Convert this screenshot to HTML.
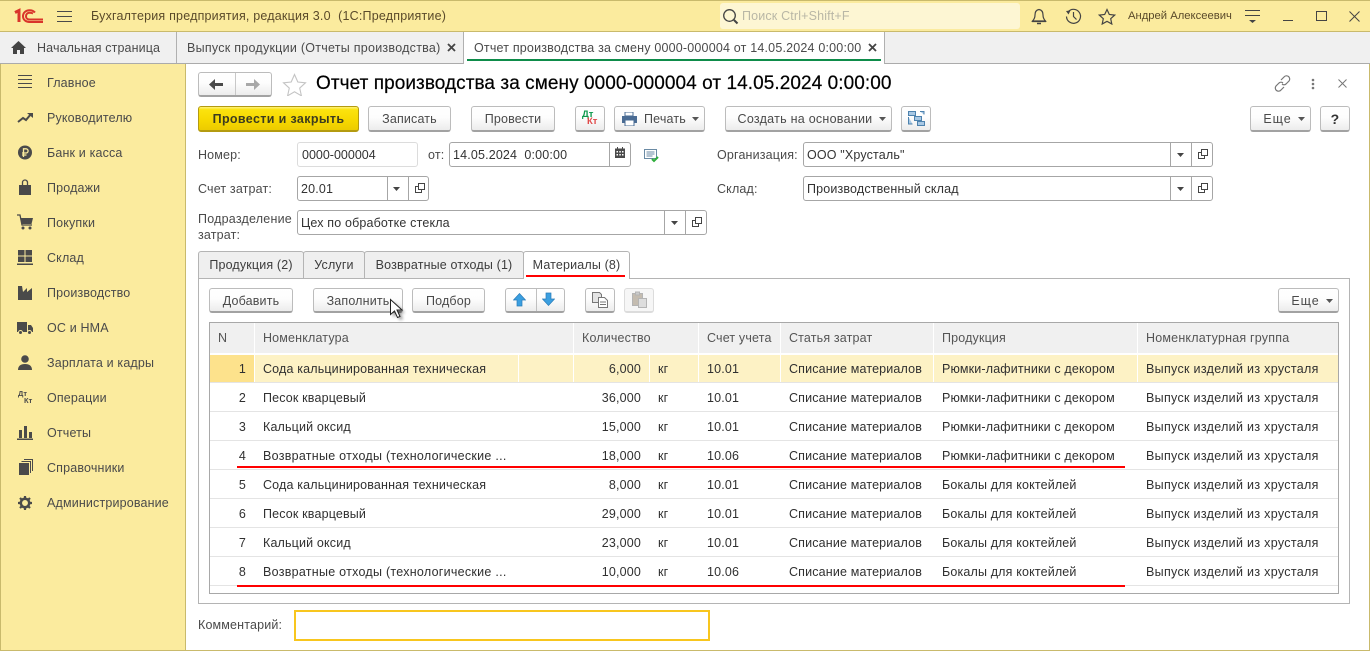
<!DOCTYPE html>
<html lang="ru"><head><meta charset="utf-8"><title>Отчет производства за смену</title>
<style>
html,body{margin:0;padding:0;width:1370px;height:651px;overflow:hidden;background:#fff}
body{position:relative;font:12.5px "Liberation Sans",Arial,sans-serif;color:#4a4a4a}
div,span,svg{position:absolute;box-sizing:border-box}
.t{white-space:nowrap;line-height:16px;letter-spacing:.16px}
.b{background:linear-gradient(#fff 0%,#fdfdfd 45%,#ececec 100%);border:1px solid #bcbcbc;border-bottom:2px solid #a2a2a2;border-radius:3px;height:26px;text-align:center;line-height:25px;color:#4a4a4a;letter-spacing:.16px;white-space:nowrap}
.bs{height:25px;line-height:24px}
.f{background:#fff;border:1px solid #a6a6a6;border-radius:3px;height:25px}
.s{top:0;bottom:0;width:1px;background:#a6a6a6}
.tab{top:251px;height:27px;background:#efefef;border:1px solid #b4b4b4;border-bottom:none;border-radius:3px 3px 0 0;line-height:27px;text-align:center;color:#3c3c3c;letter-spacing:.16px;white-space:nowrap}
.si{left:47px}
.ic{left:17px;width:16px;height:16px}
.hd{top:323px;height:30px;background:#f0f0f0;line-height:31px;padding-left:8px;color:#555;letter-spacing:.16px;white-space:nowrap}
.r{left:210px;width:1128px;height:28px;border-bottom:1px solid #e4e4e4;line-height:28px;color:#303030}
.r span{white-space:nowrap;letter-spacing:.16px;top:0}
.n{left:0;width:36px;text-align:right}
.a{left:53px}.q{left:340px;width:91px;text-align:right}.u{left:448px}.c{left:497px}.z{left:579px}.p{left:732px}
.r .g{left:936px;letter-spacing:.31px}
.r .w{letter-spacing:.27px}
.red{height:2px;background:#f00;left:237px;width:888px}
</style></head><body>
<!-- top bar -->
<div style="left:0;top:0;width:1370px;height:32px;background:#fbeb9e;border-top:1px solid #c9ba6c;border-bottom:1px solid #c9ba6c"></div>
<svg style="left:13px;top:8px" width="32" height="16" viewBox="0 0 32 16" fill="none" stroke="#d9352b" stroke-width="2"><path d="M2 4.500 6 2.500V14" stroke-width="3"/><path d="M22 4.500C20.500 2.800 18.500 2.200 16.500 2.200 12.800 2.200 10 4.800 10 8.200s2.800 5.800 6.500 5.800H30"/><path d="M20 5.500C19 5 18 4.800 16.700 4.800 14.500 4.800 13 6.200 13 8.200S14.500 11.500 16.700 11.500H30"/></svg>
<svg style="left:57px;top:10px" width="15" height="13" stroke="#4a4a4a" stroke-width="1"><path d="M0 1.500H15M0 6.500H15M0 11.500H15"/></svg>
<span class="t" style="left:91px;top:8px;color:#5a4a2a;letter-spacing:.2px">Бухгалтерия предприятия, редакция 3.0&nbsp; (1С:Предприятие)</span>
<div style="left:720px;top:3px;width:300px;height:26px;background:#fdf6d3;border-radius:3px"></div>
<svg style="left:722px;top:8px" width="17" height="17" fill="none" stroke="#444" stroke-width="1.300"><circle cx="7.500" cy="7.500" r="5.800"/><path d="M12 12l3.500 3.500" stroke-width="2"/></svg>
<span class="t" style="left:742px;top:8px;color:#b9b7a6">Поиск Ctrl+Shift+F</span>
<svg style="left:1031px;top:8px" width="16" height="17" fill="none" stroke="#444" stroke-width="1.200"><path d="M8 1.500C5 2 4 4.500 4 7c0 2.500-1 4.500-2.500 6h13C13 11.500 12 9.500 12 7c0-2.500-1-5-4-5.500zM1 13.500h14"/><path d="M6 15.500h4" stroke-width="1.500"/></svg>
<svg style="left:1065px;top:8px" width="17" height="17" fill="none" stroke="#444" stroke-width="1.200"><path d="M3 4A7 7 0 1 1 1.500 8.500"/><path d="M8.500 4v4.500l3 3"/><path d="M1 3l4.500-.5L3.500 6.500z" fill="#444" stroke="none"/></svg>
<svg style="left:1098px;top:8px" width="18" height="17" fill="none" stroke="#444" stroke-width="1.200"><path d="M9 1.500l2.300 5 5.400.6-4 3.600 1.100 5.300L9 13.300 4.200 16l1.100-5.300-4-3.600 5.400-.6z"/></svg>
<span class="t" style="left:1128px;top:8px;font-size:11.250px;color:#5a4a2a;letter-spacing:0">Андрей Алексеевич</span>
<svg style="left:1245px;top:10px" width="15" height="14" stroke="#444"><path d="M0 .500H15M0 5.500H15"/><path d="M4 10h7l-3.500 3z" fill="#444" stroke="none"/></svg>
<div style="left:1283px;top:20px;width:10px;height:1px;background:#444"></div>
<div style="left:1316px;top:11px;width:11px;height:10px;border:1px solid #444"></div>
<svg style="left:1349px;top:11px" width="11" height="11" stroke="#444"><path d="M.5.500l10 10M10.500.500l-10 10"/></svg>
<!-- tabs bar -->
<div style="left:0;top:32px;width:1370px;height:32px;background:#f0f0f0;border-bottom:1px solid #ababab"></div>
<svg style="left:11px;top:41px" width="15" height="13" fill="#444"><path d="M7.500 0 15 7h-2v6H9V9H6v4H2V7H0z"/></svg>
<span class="t" style="left:37px;top:40px;letter-spacing:.12px">Начальная страница</span>
<div style="left:176px;top:32px;width:1px;height:31px;background:#b0b0b0"></div>
<span class="t" style="left:187px;top:40px;letter-spacing:.26px">Выпуск продукции (Отчеты производства)</span>
<svg style="left:447px;top:43px" width="9" height="9" stroke="#444" stroke-width="1.800"><path d="M1 1l7 7M8 1l-7 7"/></svg>
<div style="left:463px;top:32px;width:422px;height:32px;background:#fff;border-left:1px solid #b0b0b0;border-right:1px solid #b0b0b0"></div>
<div style="left:467px;top:59px;width:414px;height:2px;background:#0e8c4a"></div>
<span class="t" style="left:474px;top:40px;letter-spacing:.19px">Отчет производства за смену 0000-000004 от 14.05.2024 0:00:00</span>
<svg style="left:868px;top:43px" width="9" height="9" stroke="#444" stroke-width="1.800"><path d="M1 1l7 7M8 1l-7 7"/></svg>
<!-- sidebar -->
<div style="left:0;top:64px;width:186px;height:587px;background:#fbeb9e;border-left:1px solid #c9ba6c;border-right:1px solid #c9ba6c;border-bottom:1px solid #c9ba6c"></div>
<div style="left:186px;top:650px;width:1184px;height:1px;background:#c9ba6c"></div>
<div style="left:1369px;top:64px;width:1px;height:587px;background:#c9ba6c"></div>
<svg class="ic" style="top:75px" fill="none" stroke="#4a4a4a"><path d="M1 .5H15M1 4.500H15M1 8.500H15M1 12.500H15"/></svg>
<svg class="ic" style="top:110px" fill="none" stroke="#4a4a4a" stroke-width="2"><path d="M1 12l5-4 3 2 5-6"/><path d="M10 3h6v5z" fill="#4a4a4a" stroke="none"/></svg>
<svg class="ic" style="top:145px"><circle cx="8" cy="7.500" r="7" fill="#4a4a4a"/><path d="M6.500 12V3.800h2.500a2 2 0 0 1 0 4.200H5M5 10h4.500" fill="none" stroke="#fbeb9e" stroke-width="1.300"/></svg>
<svg class="ic" style="top:179px" fill="#4a4a4a"><path d="M2 6h12v11H2z"/><path d="M5.500 7V3.500a2.500 2.500 0 0 1 5 0V7" fill="none" stroke="#4a4a4a" stroke-width="1.300"/></svg>
<svg class="ic" style="top:214px" fill="#4a4a4a"><path d="M3 4h13l-1.500 6H5z"/><path d="M0 1h3l2 10h10" fill="none" stroke="#4a4a4a" stroke-width="1.300"/><circle cx="6" cy="14" r="1.500"/><circle cx="13" cy="14" r="1.500"/></svg>
<svg class="ic" style="top:250px" fill="#4a4a4a"><path d="M1 0h6.500v5.500H1zM8.500 0H15v5.500H8.500zM1 6.500h6.500V12H1zM8.500 6.500H15V12H8.500zM0 13.500h16V15H0z"/></svg>
<svg class="ic" style="top:285px" fill="#4a4a4a"><path d="M1 1h4l1 6 4-4v4l5-4v12H1z"/></svg>
<svg class="ic" style="top:320px" fill="#4a4a4a"><path d="M0 2h10v10H0zM11 5h3l2 3v4h-5z"/><circle cx="3.500" cy="12.500" r="2" stroke="#fbeb9e"/><circle cx="12.500" cy="12.500" r="2" stroke="#fbeb9e"/></svg>
<svg class="ic" style="top:355px" fill="#4a4a4a"><circle cx="8" cy="4" r="3.800"/><path d="M1 15c0-4 2.500-6 7-6s7 2 7 6z"/></svg>
<span class="t" style="left:18px;top:390px;font-size:7.500px;font-weight:bold;line-height:8px;color:#4a4a4a;letter-spacing:0">Дт</span>
<span class="t" style="left:24px;top:397px;font-size:7.500px;font-weight:bold;line-height:8px;color:#4a4a4a;letter-spacing:0">Кт</span>
<svg class="ic" style="top:425px" fill="#4a4a4a"><path d="M2 5h3v8H2zM7 1h3v12H7zM12 7h3v6h-3zM0 13.500h16V15H0z"/></svg>
<svg class="ic" style="top:459px" fill="#4a4a4a"><path d="M2 4h10v13H2z"/><path d="M4.500 2.500H13.500V14M7 .5H15.500V12" fill="none" stroke="#4a4a4a"/></svg>
<svg class="ic" style="top:495px" fill="none" stroke="#4a4a4a"><circle cx="8" cy="8" r="4.200" stroke-width="2.500"/><path d="M8 1v3M8 12v3M1 8h3M12 8h3M3 3l2 2M11 11l2 2M13 3l-2 2M5 11l-2 2" stroke-width="2.200"/></svg>
<span class="t si" style="top:75px">Главное</span>
<span class="t si" style="top:110px">Руководителю</span>
<span class="t si" style="top:145px">Банк и касса</span>
<span class="t si" style="top:180px">Продажи</span>
<span class="t si" style="top:215px">Покупки</span>
<span class="t si" style="top:250px">Склад</span>
<span class="t si" style="top:285px">Производство</span>
<span class="t si" style="top:320px">ОС и НМА</span>
<span class="t si" style="top:355px">Зарплата и кадры</span>
<span class="t si" style="top:390px">Операции</span>
<span class="t si" style="top:425px">Отчеты</span>
<span class="t si" style="top:460px">Справочники</span>
<span class="t si" style="top:495px">Администрирование</span>
<!-- header -->
<div class="b" style="left:198px;top:72px;width:74px;height:25px"><div class="s" style="left:36px;background:#c8c8c8"></div></div>
<svg style="left:209px;top:79px" width="15" height="11" fill="#4a4a4a"><path d="M0 5.500 6 0v4h8v3H6v4z"/></svg>
<svg style="left:245px;top:79px" width="15" height="11" fill="#a8a8a8"><path d="M15 5.500 9 0v4H1v3h8v4z"/></svg>
<svg style="left:282px;top:73px" width="25" height="23" fill="none" stroke="#c4c4c4" stroke-width="1.100"><path d="M12.500 1.500l3.300 7.500 7.700.8-5.800 5.300 1.700 7.700-6.900-4-6.900 4 1.700-7.700-5.800-5.300 7.700-.8z"/></svg>
<span class="t" style="left:316px;top:73px;font-size:19px;line-height:22px;color:#000;letter-spacing:.07px;-webkit-text-stroke:.2px #000">Отчет производства за смену 0000-000004 от 14.05.2024 0:00:00</span>
<svg style="left:1274px;top:75px" width="17" height="17" fill="none" stroke="#777" stroke-width="1.200"><path d="M7 5l3-3a3 3 0 0 1 5 4l-3 3a3 3 0 0 1-4 0M10 12l-3 3a3 3 0 0 1-5-4l3-3a3 3 0 0 1 4 0"/></svg>
<svg style="left:1311px;top:78px" width="4" height="12" fill="#777"><circle cx="2" cy="2" r="1.300"/><circle cx="2" cy="6" r="1.300"/><circle cx="2" cy="10" r="1.300"/></svg>
<svg style="left:1338px;top:79px" width="9" height="9" stroke="#777"><path d="M.5.500l8 8M8.500.500l-8 8"/></svg>
<!-- command bar -->
<div class="b" style="left:198px;top:106px;width:161px;background:linear-gradient(#fff27a 0,#fbe30e 12%,#f6d800 60%,#eccb00 100%);border-color:#b49b10;color:#3c3c20;font-weight:bold;letter-spacing:.36px">Провести и закрыть</div>
<div class="b" style="left:368px;top:106px;width:83px">Записать</div>
<div class="b" style="left:471px;top:106px;width:84px">Провести</div>
<div class="b" style="left:575px;top:106px;width:30px"></div>
<span class="t" style="left:582px;top:110px;font-size:9.500px;font-weight:bold;line-height:10px;color:#0e9a4d;letter-spacing:0">Дт</span>
<span class="t" style="left:587px;top:117px;font-size:9.500px;font-weight:bold;line-height:10px;color:#e04a4a;letter-spacing:0">Кт</span>
<div class="b" style="left:614px;top:106px;width:91px;padding-left:25px;text-align:left;text-indent:4px">Печать</div>
<svg style="left:622px;top:112px" width="15" height="14"><path d="M3 0h8v4H3z" fill="#fff" stroke="#4a6c94"/><path d="M0 4h15v7H0z" fill="#4a6c94"/><path d="M3 8h9v6H3z" fill="#fff" stroke="#4a6c94"/></svg>
<svg style="left:692px;top:117px" width="8" height="4" fill="#555"><path d="M0 0h7L3.500 4z"/></svg>
<div class="b" style="left:725px;top:106px;width:167px;padding-right:7px;letter-spacing:.26px">Создать на основании</div>
<svg style="left:879px;top:117px" width="8" height="4" fill="#555"><path d="M0 0h7L3.500 4z"/></svg>
<div class="b" style="left:901px;top:106px;width:30px"></div>
<svg style="left:908px;top:111px" width="17" height="15" fill="#a8c8e4" stroke="#4d82ae"><path d="M.5.500h7v4h-7zM6.500 5.500h7v4h-7zM9.500 10.500h7v4h-7zM12 .5h4v3M.5 6v7h4" stroke-width="1"/></svg>
<div class="b" style="left:1250px;top:106px;width:61px;padding-right:6px;letter-spacing:.9px">Еще</div>
<svg style="left:1298px;top:117px" width="8" height="4" fill="#555"><path d="M0 0h7L3.500 4z"/></svg>
<div class="b" style="left:1320px;top:106px;width:30px;font-weight:bold;font-size:14px;color:#333">?</div>
<!-- fields -->
<span class="t" style="left:198px;top:147px">Номер:</span>
<div class="f" style="left:297px;top:142px;width:121px;border-color:#dcdcdc"></div>
<span class="t" style="left:302px;top:147px;color:#333;letter-spacing:0">0000-000004</span>
<span class="t" style="left:428px;top:147px">от:</span>
<div class="f" style="left:449px;top:142px;width:182px"><div class="s" style="left:159px"></div></div>
<span class="t" style="left:453px;top:147px;color:#333">14.05.2024&nbsp; 0:00:00</span>
<svg style="left:615px;top:147px" width="11" height="12" fill="#4a4a4a"><path d="M0 1.500h10V11H0z"/><path d="M2.500 0v2M7.500 0v2" stroke="#4a4a4a"/><path d="M1.500 4h1.500v1.500H1.500zM4.300 4h1.500v1.500H4.300zM7 4h1.500v1.500H7zM1.500 7h1.500v1.500H1.500zM4.300 7h1.500v1.500H4.300zM7 7h1.500v1.500H7z" fill="#fff"/></svg>
<svg style="left:644px;top:149px" width="16" height="14" fill="none" stroke="#6a8aa4"><path d="M.5.500h12v9H.5zM2.500 3h8M2.500 5h8M2.500 7h6"/><path d="M8 10l2 2 4-4" stroke="#2fae3c" stroke-width="2"/></svg>
<span class="t" style="left:717px;top:147px">Организация:</span>
<div class="f" style="left:803px;top:142px;width:410px"><div class="s" style="left:366px"></div><div class="s" style="left:387px"></div></div>
<span class="t" style="left:807px;top:147px;color:#333">ООО "Хрусталь"</span>
<span class="t" style="left:198px;top:181px">Счет затрат:</span>
<div class="f" style="left:297px;top:176px;width:132px"><div class="s" style="left:89px"></div><div class="s" style="left:110px"></div></div>
<span class="t" style="left:301px;top:181px;color:#333">20.01</span>
<span class="t" style="left:717px;top:181px">Склад:</span>
<div class="f" style="left:803px;top:176px;width:410px"><div class="s" style="left:366px"></div><div class="s" style="left:387px"></div></div>
<span class="t" style="left:807px;top:181px;color:#333">Производственный склад</span>
<span class="t" style="left:198px;top:211px;letter-spacing:.22px">Подразделение</span>
<span class="t" style="left:198px;top:227px">затрат:</span>
<div class="f" style="left:297px;top:210px;width:410px"><div class="s" style="left:366px"></div><div class="s" style="left:387px"></div></div>
<span class="t" style="left:301px;top:215px;color:#333">Цех по обработке стекла</span>
<svg style="left:393px;top:187px" width="7" height="4" fill="#444"><path d="M0 0h7L3.500 4z"/></svg>
<svg style="left:1177px;top:153px" width="7" height="4" fill="#444"><path d="M0 0h7L3.500 4z"/></svg>
<svg style="left:1177px;top:187px" width="7" height="4" fill="#444"><path d="M0 0h7L3.500 4z"/></svg>
<svg style="left:671px;top:221px" width="7" height="4" fill="#444"><path d="M0 0h7L3.500 4z"/></svg>
<svg style="left:415px;top:183px" width="10" height="10" fill="none" stroke="#444"><path d="M3.500.5h6v6h-6zM3 3.500H.5v6h6V7"/></svg>
<svg style="left:1198px;top:149px" width="10" height="10" fill="none" stroke="#444"><path d="M3.500.5h6v6h-6zM3 3.500H.5v6h6V7"/></svg>
<svg style="left:1198px;top:183px" width="10" height="10" fill="none" stroke="#444"><path d="M3.500.5h6v6h-6zM3 3.500H.5v6h6V7"/></svg>
<svg style="left:692px;top:217px" width="10" height="10" fill="none" stroke="#444"><path d="M3.500.5h6v6h-6zM3 3.500H.5v6h6V7"/></svg>
<!-- tab panel -->
<div style="left:198px;top:278px;width:1152px;height:326px;border:1px solid #b4b4b4;background:#fff"></div>
<div class="tab" style="left:198px;width:106px">Продукция (2)</div>
<div class="tab" style="left:303px;width:62px">Услуги</div>
<div class="tab" style="left:364px;width:160px">Возвратные отходы (1)</div>
<div class="tab" style="left:523px;width:107px;height:28px;background:#fff">Материалы (8)</div>
<div style="left:526px;top:275px;width:99px;height:2px;background:#f00"></div>
<div class="b bs" style="left:209px;top:288px;width:84px">Добавить</div>
<div class="b bs" style="left:313px;top:288px;width:90px">Заполнить</div>
<div class="b bs" style="left:412px;top:288px;width:73px">Подбор</div>
<div class="b bs" style="left:505px;top:288px;width:60px"><div class="s" style="left:30px;background:#c0c0c0"></div></div>
<svg style="left:513px;top:293px" width="13" height="14" fill="#3b9fe0" stroke="#2a7cb8" stroke-width=".7"><path d="M6.500.5 12.500 7H9v6H4V7H.5z"/></svg>
<svg style="left:542px;top:292px" width="13" height="14" fill="#3b9fe0" stroke="#2a7cb8" stroke-width=".7"><path d="M6.500 13.500 12.500 7H9V1H4v6H.5z"/></svg>
<div class="b bs" style="left:585px;top:288px;width:30px"></div>
<svg style="left:592px;top:292px" width="16" height="16" fill="#fff" stroke="#777"><path d="M.5.500h7l2 2v8h-9z" fill="#e4e4e4"/><path d="M6.500 5.500h6l3 3v7h-9z"/><path d="M8 10h6M8 12.500h6"/></svg>
<div class="b bs" style="left:624px;top:288px;width:30px;border-color:#dcdcdc;background:#f6f6f6"></div>
<svg style="left:632px;top:291px" width="15" height="17" fill="#ccc" stroke="#b4b4b4"><path d="M.5 2.500h10v12H.5z" fill="#c4bcb0"/><path d="M3.500 1h4v3h-4z"/><path d="M6.500 7.500h8v9h-8z" fill="#ddd"/></svg>
<div class="b bs" style="left:1278px;top:288px;width:61px;padding-right:6px;letter-spacing:.9px">Еще</div>
<svg style="left:1326px;top:299px" width="8" height="4" fill="#555"><path d="M0 0h7L3.500 4z"/></svg>
<!-- table -->
<div style="left:209px;top:322px;width:1130px;height:272px;border:1px solid #a8a8a8;background:#fff"></div>
<div class="hd" style="left:210px;width:44px;padding-left:8px">N</div>
<div class="hd" style="left:255px;width:318px">Номенклатура</div>
<div class="hd" style="left:574px;width:124px">Количество</div>
<div class="hd" style="left:699px;width:81px">Счет учета</div>
<div class="hd" style="left:781px;width:152px">Статья затрат</div>
<div class="hd" style="left:934px;width:203px">Продукция</div>
<div class="hd" style="left:1138px;width:200px;letter-spacing:.2px">Номенклатурная группа</div>
<div style="left:210px;top:355px;width:1128px;height:27px;background:#fdf2c5"></div>
<div style="left:210px;top:355px;width:44px;height:27px;background:#fde28c"></div>
<div style="left:254px;top:355px;width:1px;height:27px;background:#fff"></div>
<div style="left:518px;top:355px;width:1px;height:27px;background:#fff"></div>
<div style="left:573px;top:355px;width:1px;height:27px;background:#fff"></div>
<div style="left:649px;top:355px;width:1px;height:27px;background:#fff"></div>
<div style="left:698px;top:355px;width:1px;height:27px;background:#fff"></div>
<div style="left:780px;top:355px;width:1px;height:27px;background:#fff"></div>
<div style="left:933px;top:355px;width:1px;height:27px;background:#fff"></div>
<div style="left:1137px;top:355px;width:1px;height:27px;background:#fff"></div>
<div class="r" style="top:355px"><span class="n">1</span><span class="a">Сода кальцинированная техническая</span><span class="q">6,000</span><span class="u">кг</span><span class="c">10.01</span><span class="z">Списание материалов</span><span class="p">Рюмки-лафитники с декором</span><span class="g">Выпуск изделий из хрусталя</span></div>
<div class="r" style="top:384px"><span class="n">2</span><span class="a">Песок кварцевый</span><span class="q">36,000</span><span class="u">кг</span><span class="c">10.01</span><span class="z">Списание материалов</span><span class="p">Рюмки-лафитники с декором</span><span class="g">Выпуск изделий из хрусталя</span></div>
<div class="r" style="top:413px"><span class="n">3</span><span class="a">Кальций оксид</span><span class="q">15,000</span><span class="u">кг</span><span class="c">10.01</span><span class="z">Списание материалов</span><span class="p">Рюмки-лафитники с декором</span><span class="g">Выпуск изделий из хрусталя</span></div>
<div class="r" style="top:442px"><span class="n">4</span><span class="a w">Возвратные отходы (технологические ...</span><span class="q">18,000</span><span class="u">кг</span><span class="c">10.06</span><span class="z">Списание материалов</span><span class="p">Рюмки-лафитники с декором</span><span class="g">Выпуск изделий из хрусталя</span></div>
<div class="r" style="top:471px"><span class="n">5</span><span class="a">Сода кальцинированная техническая</span><span class="q">8,000</span><span class="u">кг</span><span class="c">10.01</span><span class="z">Списание материалов</span><span class="p">Бокалы для коктейлей</span><span class="g">Выпуск изделий из хрусталя</span></div>
<div class="r" style="top:500px"><span class="n">6</span><span class="a">Песок кварцевый</span><span class="q">29,000</span><span class="u">кг</span><span class="c">10.01</span><span class="z">Списание материалов</span><span class="p">Бокалы для коктейлей</span><span class="g">Выпуск изделий из хрусталя</span></div>
<div class="r" style="top:529px"><span class="n">7</span><span class="a">Кальций оксид</span><span class="q">23,000</span><span class="u">кг</span><span class="c">10.01</span><span class="z">Списание материалов</span><span class="p">Бокалы для коктейлей</span><span class="g">Выпуск изделий из хрусталя</span></div>
<div class="r" style="top:558px"><span class="n">8</span><span class="a w">Возвратные отходы (технологические ...</span><span class="q">10,000</span><span class="u">кг</span><span class="c">10.06</span><span class="z">Списание материалов</span><span class="p">Бокалы для коктейлей</span><span class="g">Выпуск изделий из хрусталя</span></div>
<div class="red" style="top:466px"></div>
<div class="red" style="top:585px"></div>
<!-- cursor -->
<svg style="left:388px;top:298px" width="20" height="26"><defs><filter id="bl"><feGaussianBlur stdDeviation="1.500"/></filter></defs><path d="M5 4v15l4-3 3 6 3-1-3-6h5z" fill="#000" opacity=".45" filter="url(#bl)"/><path d="M2.500 1.500v15l4-3.500 3 6.500 2.500-1-3-6.500h5z" fill="#fff" stroke="#222"/></svg>
<!-- comment -->
<span class="t" style="left:198px;top:617px">Комментарий:</span>
<div style="left:294px;top:610px;width:416px;height:31px;border:2px solid #f8c61e;background:#fff"></div>
</body></html>
